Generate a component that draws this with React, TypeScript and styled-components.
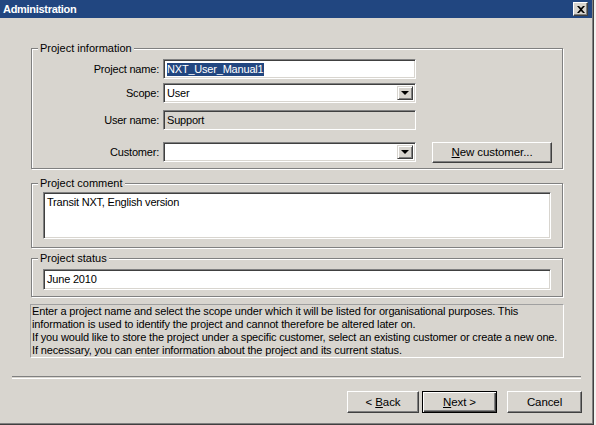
import React from 'react'
import styled, { createGlobalStyle } from 'styled-components'

const GlobalStyle = createGlobalStyle`
  html, body {
    margin: 0;
    padding: 0;
    background: #f2f2f0;
  }
  body {
    font-family: 'Liberation Sans', Arial, sans-serif;
    font-size: 11px;
    color: #000;
  }
`

const face = '#d8d5cf'
const navy = '#214680'

const Window = styled.div`
  width: 594px;
  height: 425px;
  box-sizing: border-box;
  background: ${face};
  border-right: 1px solid #404040;
  border-bottom: 1px solid #404040;
  box-shadow: inset -1px -1px 0 #808080;
  display: flex;
  flex-direction: column;
  overflow: hidden;
`
const TitleBar = styled.div`
  height: 18px;
  margin-right: 1px;
  background: ${navy};
  display: flex;
  align-items: center;
  justify-content: space-between;
  padding: 0 4px 0 3px;
  color: #fff;
  font-weight: 700;
  letter-spacing: -0.3px;
`
const CloseButton = styled.div`
  width: 15px;
  height: 14px;
  box-sizing: border-box;
  background: ${face};
  border-top: 1px solid #fff;
  border-left: 1px solid #fff;
  border-right: 1px solid #404040;
  border-bottom: 1px solid #404040;
  box-shadow: inset -1px -1px 0 #808080;
  display: flex;
  align-items: center;
  justify-content: center;
`
const Content = styled.div`
  padding: 0 30px 0 31px;
  display: flex;
  flex-direction: column;
`
const GroupBox = styled.div<{ $mt: number; $pad: string }>`
  position: relative;
  margin-top: ${p => p.$mt}px;
  border: 1px solid #808080;
  box-shadow: 1px 1px 0 #fff, inset 1px 1px 0 #fff;
  padding: ${p => p.$pad};
  display: flex;
  flex-direction: column;
`
const Caption = styled.div`
  position: absolute;
  top: -7px;
  left: 6px;
  padding: 0 2px;
  background: ${face};
  line-height: 13px;
`
const Row = styled.div<{ $mt?: number }>`
  display: flex;
  align-items: center;
  height: 20px;
  margin-top: ${p => p.$mt ?? 0}px;
`
const Label = styled.div`
  width: 127px;
  margin-right: 4px;
  text-align: right;
  letter-spacing: -0.2px;
`
const Field = styled.div<{ $disabled?: boolean; $w?: string; $h?: number }>`
  position: relative;
  width: ${p => p.$w ?? '253px'};
  height: ${p => p.$h ?? 20}px;
  box-sizing: border-box;
  background: ${p => (p.$disabled ? face : '#fff')};
  border-top: 1px solid #808080;
  border-left: 1px solid #808080;
  border-right: 1px solid #fff;
  border-bottom: 1px solid #fff;
  box-shadow: inset 1px 1px 0 #404040, inset -1px -1px 0 ${face};
  padding: 3px 3px 0 3px;
  line-height: 13px;
  letter-spacing: -0.2px;
  display: flex;
  align-items: flex-start;
`
const Selected = styled.span`
  background: ${navy};
  color: #fff;
  padding: 0 1px 0 0;
`
const DropButton = styled.div`
  position: absolute;
  right: 2px;
  top: 2px;
  width: 16px;
  height: 14px;
  box-sizing: border-box;
  background: ${face};
  border-top: 1px solid ${face};
  border-left: 1px solid ${face};
  border-right: 1px solid #404040;
  border-bottom: 1px solid #404040;
  box-shadow: inset 1px 1px 0 #fff, inset -1px -1px 0 #808080;
  display: flex;
  align-items: center;
  justify-content: center;
  &::after {
    content: '';
    border-left: 4px solid transparent;
    border-right: 4px solid transparent;
    border-top: 4px solid #000;
  }
`
const Button = styled.div<{ $w: number; $default?: boolean }>`
  width: ${p => p.$w}px;
  height: ${p => (p.$w > 100 ? 21 : 22)}px;
  box-sizing: border-box;
  background: ${face};
  border-top: 1px solid ${p => (p.$default ? '#000' : '#fff')};
  border-left: 1px solid ${p => (p.$default ? '#000' : '#fff')};
  border-right: 1px solid ${p => (p.$default ? '#000' : '#404040')};
  border-bottom: 1px solid ${p => (p.$default ? '#000' : '#404040')};
  box-shadow: ${p =>
    p.$default
      ? 'inset 1px 1px 0 #fff, inset -1px -1px 0 #404040, inset -2px -2px 0 #808080'
      : 'inset -1px -1px 0 #808080'};
  display: flex;
  align-items: center;
  justify-content: center;
  font-size: 11.5px;
  letter-spacing: -0.1px;
`
const InfoBox = styled.div`
  margin: 7px -1px 0 -1px;
  height: 54px;
  box-sizing: border-box;
  border-top: 1px solid #a0a0a0;
  border-left: 1px solid #a0a0a0;
  border-right: 1px solid #fff;
  border-bottom: 1px solid #fff;
  padding: 0 1px;
  line-height: 13px;
  letter-spacing: -0.15px;
`
const Separator = styled.div`
  margin: 18px 12px 0 12px;
  height: 1px;
  border-top: 1px solid #808080;
  border-bottom: 1px solid #fff;
`
const Footer = styled.div`
  display: flex;
  justify-content: flex-end;
  padding: 12px 11px 0 0;
`

export default function App() {
  return (
    <>
      <GlobalStyle />
      <Window>
        <TitleBar>
          <span>Administration</span>
          <CloseButton>
            <svg width="8" height="7" viewBox="0 0 8 7">
              <path d="M0 0 L2 0 L4 2 L6 0 L8 0 L5 3.5 L8 7 L6 7 L4 5 L2 7 L0 7 L3 3.5 Z" fill="#000" />
            </svg>
          </CloseButton>
        </TitleBar>
        <Content>
          <GroupBox $mt={30} $pad="10px 0 6px 0">
            <Caption>Project information</Caption>
            <Row>
              <Label>Project name:</Label>
              <Field>
                <Selected>NXT_User_Manual1</Selected>
              </Field>
            </Row>
            <Row $mt={4}>
              <Label>Scope:</Label>
              <Field>
                User
                <DropButton />
              </Field>
            </Row>
            <Row $mt={7}>
              <Label>User name:</Label>
              <Field $disabled>Support</Field>
            </Row>
            <Row $mt={12}>
              <Label>Customer:</Label>
              <Field>
                <DropButton />
              </Field>
              <div style={{ width: 16 }} />
              <Button $w={120}>
                <span>
                  <u>N</u>ew customer...
                </span>
              </Button>
            </Row>
          </GroupBox>
          <GroupBox $mt={14} $pad="8px 11px 8px 11px">
            <Caption>Project comment</Caption>
            <Field $w="100%" $h={47}>
              Transit NXT, English version
            </Field>
          </GroupBox>
          <GroupBox $mt={10} $pad="10px 11px 6px 11px">
            <Caption>Project status</Caption>
            <Field $w="100%" $h={21}>
              June 2010
            </Field>
          </GroupBox>
          <InfoBox>
            Enter a project name and select the scope under which it will be listed for organisational purposes. This
            <br />
            information is used to identify the project and cannot therefore be altered later on.
            <br />
            If you would like to store the project under a specific customer, select an existing customer or create a new one.
            <br />
            If necessary, you can enter information about the project and its current status.
          </InfoBox>
        </Content>
        <Separator />
        <Footer>
          <Button $w={72}>
            <span>
              &lt; <u>B</u>ack
            </span>
          </Button>
          <div style={{ width: 3 }} />
          <Button $w={75} $default>
            <span>
              <u>N</u>ext &gt;
            </span>
          </Button>
          <div style={{ width: 10 }} />
          <Button $w={75}>Cancel</Button>
        </Footer>
      </Window>
    </>
  )
}
